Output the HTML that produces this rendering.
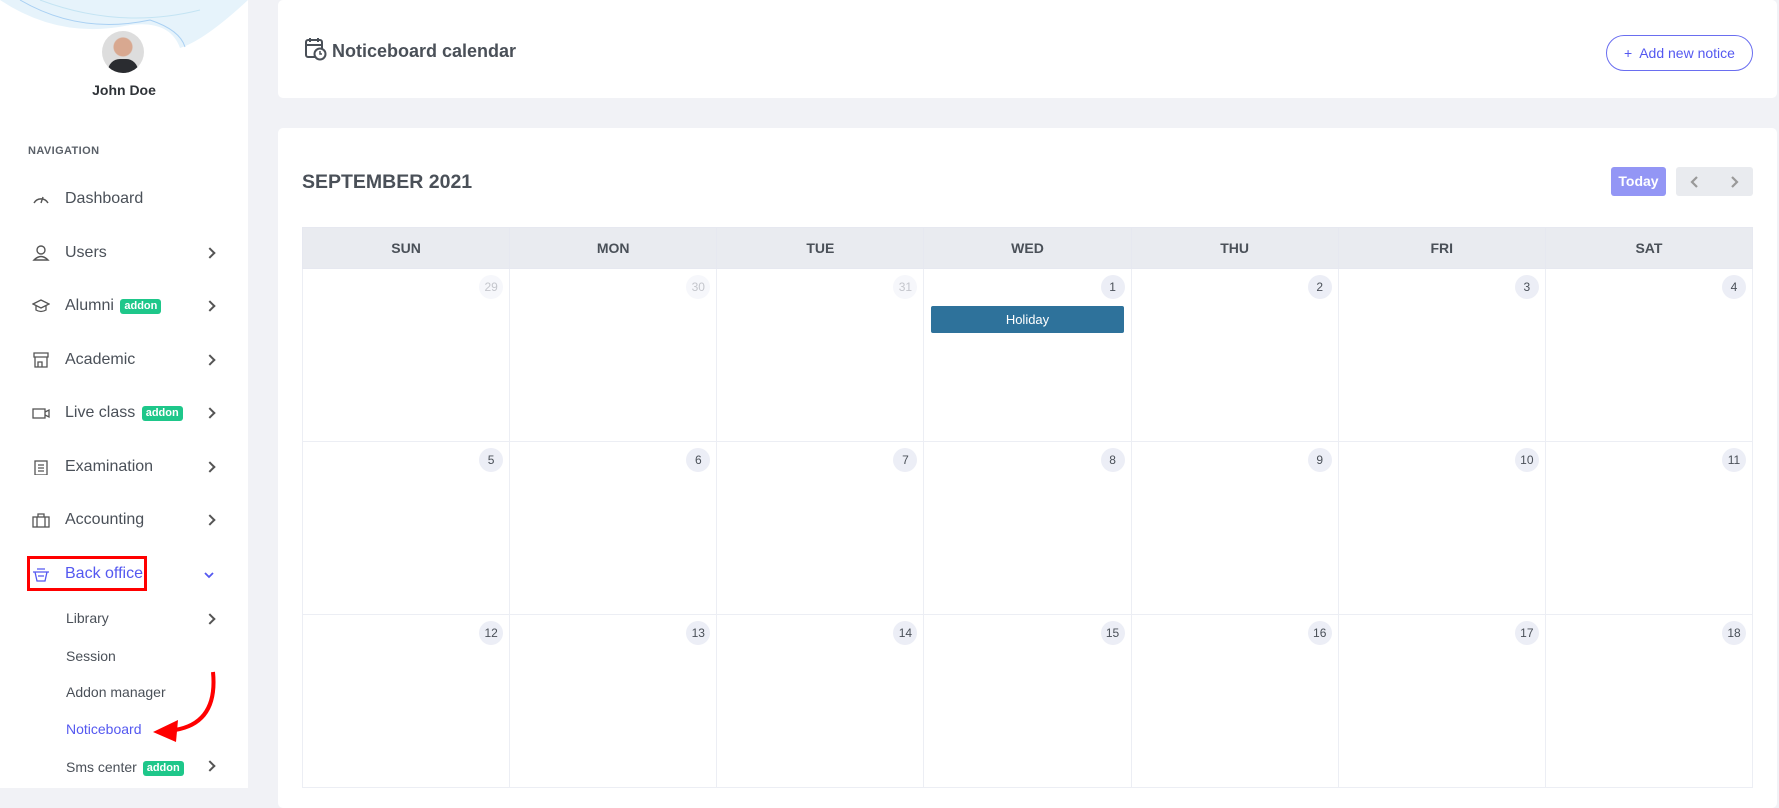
<!DOCTYPE html>
<html><head><meta charset="utf-8"><style>
*{box-sizing:border-box;margin:0;padding:0}
body{width:1779px;height:788px;overflow:hidden;background:#f1f2f6;font-family:"Liberation Sans",sans-serif;position:relative;color:#4a5058}
.sb{position:absolute;left:0;top:0;width:248px;height:788px;background:#fff}
.abs{position:absolute}
.item{position:absolute;left:0;width:248px;height:30px;font-size:16px;color:#4a5058;line-height:30px}
.item .t{position:absolute;left:65px;top:0}
.item svg.ic{position:absolute;left:32px;top:7px}
.chev{position:absolute;left:204px;top:0;width:12px;height:30px}
.chev::after{content:"";position:absolute;left:2px;top:11px;width:6px;height:6px;border-top:2px solid #555;border-right:2px solid #555;transform:rotate(45deg)}
.badge{display:inline-block;background:#1ec78a;color:#fff;font-size:11px;font-weight:bold;border-radius:3px;padding:0 4px;line-height:15px;vertical-align:1px;margin-left:2px}
.sub{position:absolute;left:66px;font-size:14px;color:#4a5058}
.card{position:absolute;left:278px;width:1499px;background:#fff;border-radius:5px}
table{position:absolute;left:302px;top:227px;border-collapse:collapse;width:1451px;table-layout:fixed}
th{background:#e9ebf0;height:41px;font-size:14px;font-weight:bold;color:#4a5058;border:1px solid #e6e8f0}
td{height:173px;border:1px solid #eceef4;vertical-align:top;position:relative}
.n{position:absolute;right:6px;top:6px;width:24px;height:24px;border-radius:12px;background:#eceef6;font-size:12px;text-align:center;line-height:24px;color:#4a5058}
.n.o{background:#f6f7fb;color:#c4c6cc}
</style></head><body>
<div class="sb">
<svg class="abs" style="left:0;top:0" width="248" height="50"><path d="M0 0 Q60 40 130 25 Q170 20 180 48 Q205 40 248 0Z" fill="#e6f3fb"/><path d="M20 0 Q80 35 150 20 Q180 30 185 47" stroke="#a9d0f3" fill="none"/><path d="M40 0 Q120 30 200 10" stroke="#c4e4f3" fill="none"/></svg>
<div class="abs" style="left:102px;top:31px;width:42px;height:42px;border-radius:21px;background:radial-gradient(circle at 50% 38%,#d8a890 0 9px,#ddd 10px);overflow:hidden"><div style="position:absolute;left:6px;top:28px;width:30px;height:20px;border-radius:12px 12px 0 0;background:#2a2c30"></div></div>
<div class="abs" style="left:0;width:248px;top:82px;text-align:center;font-weight:bold;font-size:14px;color:#2f3338">John Doe</div>
<div class="abs" style="left:28px;top:145px;font-size:11px;font-weight:bold;color:#5a6068;letter-spacing:.4px">NAVIGATION</div>
<div class="item" style="top:184px"><svg class="ic" width="18" height="16"><path d="M2 12 A8 8 0 0 1 16 12M9 12 L11 6" stroke="#555" stroke-width="1.4" fill="none"/></svg><span class="t">Dashboard</span></div>
<div class="item" style="top:238px"><svg class="ic" width="18" height="16"><circle cx="9" cy="5" r="4" stroke="#555" stroke-width="1.4" fill="none"/><path d="M2 15 Q9 8 16 15Z" stroke="#555" stroke-width="1.4" fill="none"/></svg><span class="t">Users</span><span class="chev"></span></div>
<div class="item" style="top:291px"><svg class="ic" width="18" height="16"><path d="M1 6 L9 2 L17 6 L9 10Z M4 8 V12 Q9 15 14 12 V8" stroke="#555" stroke-width="1.3" fill="none"/></svg><span class="t">Alumni <span class="badge">addon</span></span><span class="chev"></span></div>
<div class="item" style="top:345px"><svg class="ic" width="18" height="16"><path d="M2 1 H16 V5 H2Z M3 5 V15 H15 V5 M6 15 V10 H10 V15" stroke="#555" stroke-width="1.3" fill="none"/></svg><span class="t">Academic</span><span class="chev"></span></div>
<div class="item" style="top:398px"><svg class="ic" width="18" height="16"><rect x="1" y="4" width="12" height="9" stroke="#555" stroke-width="1.3" fill="none"/><path d="M13 7 L17 5 V12 L13 10" stroke="#555" stroke-width="1.3" fill="none"/></svg><span class="t">Live class <span class="badge">addon</span></span><span class="chev"></span></div>
<div class="item" style="top:452px"><svg class="ic" width="18" height="16"><rect x="3" y="2" width="12" height="14" stroke="#555" stroke-width="1.3" fill="none"/><path d="M6 6H12M6 9H12M6 12H12" stroke="#555" stroke-width="1.2"/></svg><span class="t">Examination</span><span class="chev"></span></div>
<div class="item" style="top:505px"><svg class="ic" width="18" height="16"><rect x="1" y="5" width="16" height="10" stroke="#555" stroke-width="1.3" fill="none"/><path d="M6 5V2H12V5M5 5V15M13 5V15" stroke="#555" stroke-width="1.3" fill="none"/></svg><span class="t">Accounting</span><span class="chev"></span></div>
<div class="item" style="top:559px;color:#5458f0"><svg class="ic" width="18" height="16"><path d="M1 6H17M3 6L5 15H13L15 6M5 3H13M6 10H12" stroke="#5458f0" stroke-width="1.3" fill="none"/></svg><span class="t">Back office</span><svg class="abs" style="left:203px;top:12px" width="12" height="8"><path d="M2 2L6 6L10 2" stroke="#5458f0" stroke-width="1.8" fill="none"/></svg></div>
<div class="abs" style="left:27px;top:556px;width:120px;height:35px;border:3px solid #f00"></div>
<div class="sub" style="top:610px">Library</div><span class="chev" style="top:604px"></span>
<div class="sub" style="top:648px">Session</div>
<div class="sub" style="top:684px">Addon manager</div>
<div class="sub" style="top:721px;color:#5458f0">Noticeboard</div>
<div class="sub" style="top:759px">Sms center <span class="badge">addon</span></div><span class="chev" style="top:751px"></span>
<svg class="abs" style="left:150px;top:668px" width="70" height="80"><path d="M63 4 Q68 55 25 62" stroke="#f00" stroke-width="4" fill="none"/><path d="M3 64 L28 52 L26 74Z" fill="#f00"/></svg>
</div>

<div class="card" style="top:0;height:98px">
<svg class="abs" style="left:27px;top:37px" width="22" height="24"><rect x="1" y="3" width="16" height="17" rx="2" stroke="#4a5058" stroke-width="2" fill="none"/><path d="M1 8H17M5 1V5M13 1V5" stroke="#4a5058" stroke-width="2"/><circle cx="15" cy="17" r="5.5" fill="#fff" stroke="#4a5058" stroke-width="2"/><path d="M15 14V17H17" stroke="#4a5058" stroke-width="1.5" fill="none"/></svg>
<div class="abs" style="left:54px;top:41px;font-size:18px;font-weight:bold;color:#4a5058">Noticeboard calendar</div>
<div class="abs" style="left:1328px;top:35px;width:147px;height:36px;border:1px solid #6a6ef0;border-radius:18px;color:#5458f0;font-size:14px;text-align:center;line-height:34px">+&nbsp; Add new notice</div>
</div>

<div class="card" style="top:128px;height:680px">
<div class="abs" style="left:24px;top:43px;font-size:19.5px;font-weight:bold;color:#4a5058">SEPTEMBER 2021</div>
<div class="abs" style="left:1333px;top:39px;width:55px;height:29px;background:#9396f5;border-radius:3px;color:#fff;font-size:14px;font-weight:bold;text-align:center;line-height:29px">Today</div>
<div class="abs" style="left:1398px;top:39px;width:77px;height:29px;background:#e9ebef;border-radius:3px">
<svg class="abs" style="left:14px;top:9px" width="10" height="12"><path d="M7 1L2 6L7 11" stroke="#999" stroke-width="2.2" fill="none"/></svg>
<svg class="abs" style="left:53px;top:9px" width="10" height="12"><path d="M3 1L8 6L3 11" stroke="#999" stroke-width="2.2" fill="none"/></svg></div>
</div>

<table>
<tr><th>SUN</th><th>MON</th><th>TUE</th><th>WED</th><th>THU</th><th>FRI</th><th>SAT</th></tr>
<tr><td><span class="n o">29</span></td><td><span class="n o">30</span></td><td><span class="n o">31</span></td><td><span class="n">1</span><div style="position:absolute;left:7px;top:37px;right:7px;height:27px;background:#2e729b;border-radius:2px;color:#fff;font-size:13px;text-align:center;line-height:27px">Holiday</div></td><td><span class="n">2</span></td><td><span class="n">3</span></td><td><span class="n">4</span></td></tr>
<tr><td><span class="n">5</span></td><td><span class="n">6</span></td><td><span class="n">7</span></td><td><span class="n">8</span></td><td><span class="n">9</span></td><td><span class="n">10</span></td><td><span class="n">11</span></td></tr>
<tr><td><span class="n">12</span></td><td><span class="n">13</span></td><td><span class="n">14</span></td><td><span class="n">15</span></td><td><span class="n">16</span></td><td><span class="n">17</span></td><td><span class="n">18</span></td></tr>
</table>
</body></html>
